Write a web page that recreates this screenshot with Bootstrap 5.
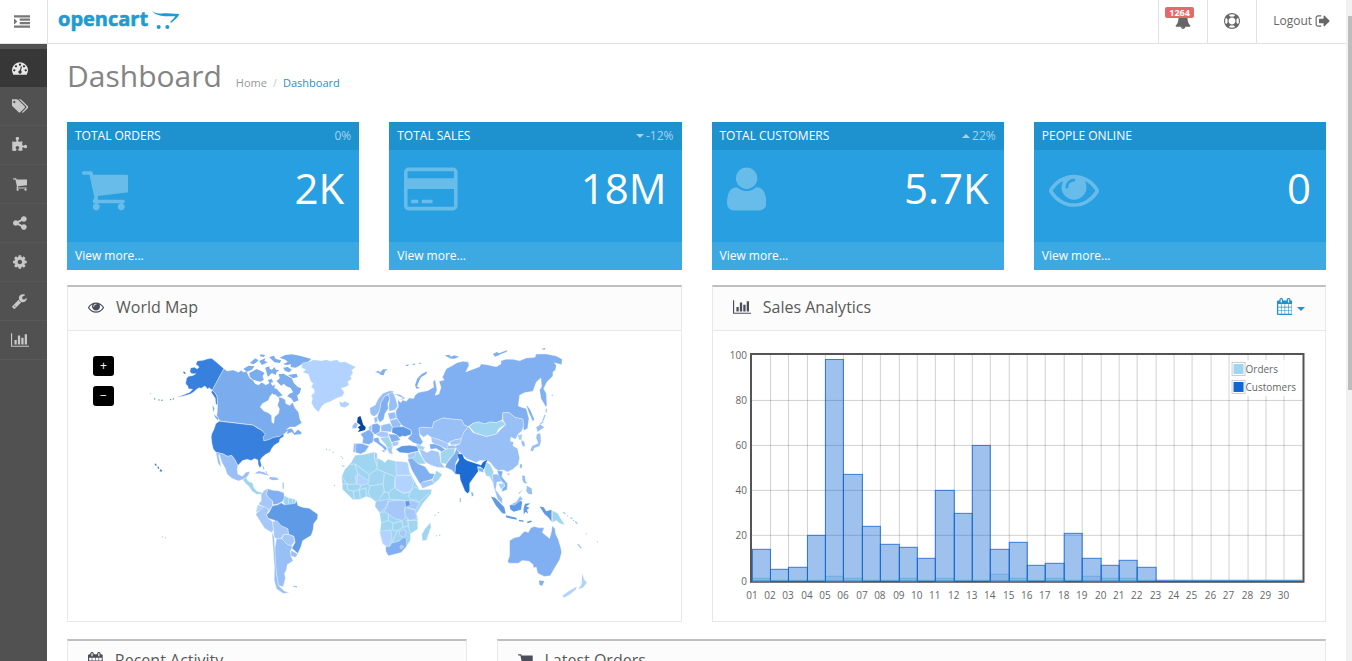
<!DOCTYPE html>
<html lang="en">
<head>
<meta charset="utf-8">
<meta name="viewport" content="width=device-width, initial-scale=1">
<title>Dashboard</title>
<link href="https://cdn.jsdelivr.net/npm/bootstrap@5.3.0/dist/css/bootstrap.min.css" rel="stylesheet">
<style>
body{font-family:"Open Sans",sans-serif;font-size:12px;line-height:18px;color:#666;background:#fff}
a{text-decoration:none}
svg{display:block}
.ico{fill:currentColor;flex:none;height:16px;width:auto}
.top-bar{height:44px;border-bottom:1px solid #e1e1e1}
.top-bar .cell{padding:0 16px 2px;border:0;border-left:1px solid #e1e1e1;background:none;color:#666;display:flex;align-items:center;gap:3px}
.top-bar .menu-toggle{width:47px;padding:0 3px 0 0;justify-content:center;border-left:0;color:#777}
.brand{border-left:1px solid #e1e1e1;padding-left:10px}
.alert-count{position:absolute;left:6px;top:7px;background:#e3696b;color:#fff;font-size:9px;font-weight:700;line-height:11px;padding:0 4px;border-radius:2px}
.side{width:47px;background:#515151;padding-top:5px}
.side a{height:39px;padding-right:7px;color:#c8c8c8;border-bottom:1px solid #585858;display:flex;align-items:center;justify-content:center}
.side a.active{height:38px;background:#373737;color:#e8e8e8;border:0}
.page{padding:0 20px}
.page .row{--bs-gutter-x:30px}
.page h1{font-size:30px;line-height:36px;color:#848484;font-weight:400;margin:0}
.page-head{padding:14px 0 28px;gap:14px}
.breadcrumb{--bs-breadcrumb-item-padding-x:6px;--bs-breadcrumb-divider-color:#ccc;--bs-breadcrumb-font-size:11px}
.breadcrumb a{color:#999}
.breadcrumb .active a{color:#1e91cf}
.tile{background:#279fe0;color:#fff;margin-bottom:15px}
.tile-head{background:#1e91cf;padding:5px 8px;text-transform:uppercase}
.tile-head .pct{color:#a5d3ee;gap:2px}
.tile-head .pct svg{width:8px;height:5px;fill:currentColor}
.tile-body{height:92px;padding:14px 15px}
.tile-body .ico{height:50px;opacity:.3}
.tile-body .num{font-size:42px;line-height:48px}
.tile-foot{background:#3da9e3;padding:5px 8px}
.tile-foot a{color:#fff}
.box{border:1px solid #e8e8e8;border-top:2px solid #bfbfbf;margin-bottom:17px}
.box-head{background:#fcfcfc;border-bottom:1px solid #e8e8e8;height:44px;padding:0 20px 4px;gap:12px;color:#595959}
.box-head h2{font-size:16px;line-height:20px;font-weight:400;margin:0}
.box-head .ico{color:#4c4d5a}
.box-body{padding:15px}
.range-btn{border:0;padding:0;background:none;color:#1e91cf;font-size:14px;display:flex;align-items:center;gap:1px}
.range-btn .ico{color:#1e91cf;height:17px}
.range-btn.dropdown-toggle::after{border-top-width:4px;border-right-width:4px;border-left-width:4px;margin-top:4px}
.zoom-set{position:absolute;left:25px;top:25px;gap:10px}
.zoom-set button{width:21px;height:20px;border:0;border-radius:3px;background:#000;color:#fff;padding:0;line-height:18px}
.chart text{font-size:10px;fill:#666}
.land path{stroke:#fff;stroke-width:1;stroke-linejoin:round}
.rail{width:6px;background:#f1f1f1;padding:16px 0 0 2px}
.rail span{display:block;height:58%;background:#bdbdbd}
.c1{fill:#a0d5f1}.c2{fill:#b2d3ff}.c3{fill:#a6c8f9}.c4{fill:#98bff6}.c5{fill:#81b0f2}.c6{fill:#7bacee}.c7{fill:#5f9ae7}.c8{fill:#3780de}.c9{fill:#1c6cd4}.c10{fill:#04479f}
.land .isle{stroke:none}
.land .dots{fill:none;stroke-width:4;stroke-linecap:round}
.land .dots path{stroke-width:4;stroke:#a6c8f9}
.land .dots .us{stroke:#3780de}
.land .edge{fill:none;stroke:#d9eefc;stroke-width:2}
</style>
</head>
<body>
<svg width="0" height="0" class="position-absolute" aria-hidden="true">
<symbol id="i-cart" viewBox="64 0 1664 1792"><path d="M704 1536q0 52-38 90t-90 38-90-38-38-90 38-90 90-38 90 38 38 90zm896 0q0 52-38 90t-90 38-90-38-38-90 38-90 90-38 90 38 38 90zm128-1088v512q0 24-16.500 42.500t-40.500 21.500l-1044 122q13 60 13 70 0 16-24 64h920q26 0 45 19t19 45-19 45-45 19h-1024q-26 0-45-19t-19-45q0-11 8-31.500t16-36 21.500-40 15.500-29.500l-177-823h-204q-26 0-45-19t-19-45 19-45 45-19h256q16 0 28.500 6.500t19.500 15.500 13 24.500 8 26 5.500 29.500 4.500 26h1201q26 0 45 19t19 45z"/></symbol>
<symbol id="i-bars" viewBox="0 0 2048 1792"><path d="M640 896v512h-256v-512h256zm384-512v1024h-256v-1024h256zm1024 1152v128h-2048v-1536h128v1408h1920zm-640-896v768h-256v-768h256zm384-384v1152h-256v-1152h256z"/></symbol>
<symbol id="i-eye" viewBox="0 0 1792 1792"><path d="M1664 960q-152-236-381-353 61 104 61 225 0 185-131.500 316.500t-316.500 131.500-316.500-131.500-131.500-316.500q0-121 61-225-229 117-381 353 133 205 333.500 326.500t434.500 121.500 434.500-121.500 333.500-326.500zm-720-384q0-20-14-34t-34-14q-125 0-214.500 89.500t-89.500 214.500q0 20 14 34t34 14 34-14 14-34q0-86 61-147t147-61q20 0 34-14t14-34zm848 384q0 34-20 69-140 230-376.500 368.500t-499.500 138.500-499.500-139-376.500-368q-20-35-20-69t20-69q140-229 376.500-368t499.500-139 499.500 139 376.500 368q20 35 20 69z"/></symbol>
<symbol id="i-cal" viewBox="64 0 1664 1792"><path d="M192 1664h288v-288h-288v288zm352 0h320v-288h-320v288zm-352-352h288v-320h-288v320zm352 0h320v-320h-320v320zm-352-384h288v-288h-288v288zm736 736h320v-288h-320v288zm-384-736h320v-288h-320v288zm768 736h288v-288h-288v288zm-384-352h320v-320h-320v320zm-352-864v-288q0-13-9.500-22.500t-22.500-9.500h-64q-13 0-22.500 9.500t-9.500 22.500v288q0 13 9.500 22.500t22.500 9.500h64q13 0 22.500-9.500t9.500-22.500zm736 864h288v-320h-288v320zm-384-384h320v-288h-320v288zm384 0h288v-288h-288v288zm32-480v-288q0-13-9.500-22.500t-22.500-9.500h-64q-13 0-22.500 9.500t-9.500 22.500v288q0 13 9.500 22.500t22.500 9.500h64q13 0 22.500-9.500t9.500-22.500zm384-64v1280q0 52-38 90t-90 38h-1408q-52 0-90-38t-38-90v-1280q0-52 38-90t90-38h128v-96q0-66 47-113t113-47h64q66 0 113 47t47 113v96h384v-96q0-66 47-113t113-47h64q66 0 113 47t47 113v96h128q52 0 90 38t38 90z"/></symbol>
</svg>

<div class="d-flex vh-100 overflow-hidden">
<div class="d-flex flex-column flex-grow-1 overflow-hidden">
<header class="top-bar d-flex flex-shrink-0">
  <button class="cell menu-toggle" type="button" aria-label="Toggle menu"><svg class="ico" viewBox="0 0 1792 1792"><path d="M352 832q0 14-9 23l-288 288q-9 9-23 9-13 0-22.500-9.500t-9.500-22.500v-576q0-13 9.500-22.500t22.500-9.500q14 0 23 9l288 288q9 9 9 23zM0 1280h1792v256h-1792zM640 896h1152v256h-1152zM640 512h1152v256h-1152zM0 128h1792v256h-1792z"/></svg></button>
  <a class="brand d-flex align-items-center" href="#" aria-label="opencart">
    <svg width="124" height="32" viewBox="0 0 124 32">
      <text x="0" y="20" font-size="20" font-weight="700" fill="#1e9bd0" stroke="#1e9bd0" stroke-width=".6" stroke-linejoin="round">opencart</text>
      <g fill="#1e9bd0" transform="translate(-58 -5) scale(.33333)"><path d="M456 30C464 38 480 38 500 37L538 39Q534 50 514 65L510 63Q522 53 526 46C500 46 470 48 456 30Z"/><circle cx="476" cy="78" r="6"/><circle cx="502" cy="78" r="6"/></g>
    </svg></a>
  <div class="ms-auto d-flex">
    <a class="cell position-relative" href="#" aria-label="Notifications"><svg class="ico" viewBox="0 0 1792 1792"><path d="M912 1696q0-16-16-16-59 0-101.500-42.500t-42.500-101.500q0-16-16-16t-16 16q0 73 51.500 124.500t124.500 51.500q16 0 16-16zm816-288q0 52-38 90t-90 38h-448q0 106-75 181t-181 75-181-75-75-181h-448q-52 0-90-38t-38-90q50-42 91-88t85-119.500 74.500-158.500 50-206 19.500-260q0-152 117-282.500t307-158.500q-8-19-8-39 0-40 28-68t68-28 68 28 28 68q0 20-8 39 190 28 307 158.500t117 282.500q0 139 19.500 260t50 206 74.500 158.500 85 119.500 91 88z"/></svg><span class="alert-count">1264</span></a>
    <a class="cell" href="#" aria-label="Help"><svg class="ico" viewBox="0 0 1792 1792"><path d="M896 0q182 0 348 71t286 191 191 286 71 348-71 348-191 286-286 191-348 71-348-71-286-191-191-286-71-348 71-348 191-286 286-191 348-71zm0 128q-190 0-361 90l194 194q82-28 167-28t167 28l194-194q-171-90-361-90zm-678 1129l194-194q-28-82-28-167t28-167l-194-194q-90 171-90 361t90 361zm678 407q190 0 361-90l-194-194q-82 28-167 28t-167-28l-194 194q171 90 361 90zm0-384q159 0 271.500-112.500t112.500-271.500-112.500-271.500-271.500-112.500-271.500 112.500-112.500 271.500 112.500 271.500 271.500 112.500zm484-217l194 194q90-171 90-361t-90-361l-194 194q28 82 28 167t-28 167z"/></svg></a>
    <a class="cell" href="#">Logout <svg class="ico" viewBox="0 0 1664 1792"><path d="M704 1440q0 4 1 20t.5 26.500-3 23.500-10 19.500-20.500 6.500h-320q-119 0-203.500-84.500t-84.500-203.500v-704q0-119 84.500-203.500t203.500-84.500h320q13 0 22.500 9.500t9.500 22.500q0 4 1 20t.5 26.500-3 23.500-10 19.500-20.500 6.500h-320q-66 0-113 47t-47 113v704q0 66 47 113t113 47h312l11.500 1 11.500 3 8 5.500 7 9 2 13.500zm928-544q0 26-19 45l-544 544q-19 19-45 19t-45-19-19-45v-288h-448q-26 0-45-19t-19-45v-384q0-26 19-45t45-19h448v-288q0-26 19-45t45-19 45 19l544 544q19 19 19 45z"/></svg></a>
  </div>
</header>
<div class="d-flex flex-grow-1 overflow-hidden">
<nav class="side flex-shrink-0" aria-label="Main">
  <a class="active" href="#" aria-label="Dashboard"><svg class="ico" viewBox="0 0 1792 1792"><path d="M384 1152q0-53-37.500-90.500t-90.500-37.500-90.500 37.500-37.500 90.500 37.500 90.500 90.500 37.500 90.500-37.500 37.500-90.500zm192-448q0-53-37.500-90.500t-90.500-37.500-90.500 37.500-37.500 90.500 37.500 90.500 90.500 37.500 90.500-37.500 37.500-90.500zm428 481l101-382q6-26-7.500-48.500t-38.500-29.500-48 6.500-30 39.500l-101 382q-60 5-107 43.500t-63 98.500q-20 77 20 146t117 89 146-20 89-117q16-60-6-117t-72-91zm660-33q0-53-37.500-90.500t-90.500-37.500-90.500 37.500-37.500 90.500 37.500 90.500 90.500 37.500 90.500-37.500 37.500-90.500zm-640-640q0-53-37.500-90.500t-90.500-37.500-90.500 37.500-37.500 90.500 37.500 90.500 90.500 37.500 90.500-37.500 37.500-90.500zm448 192q0-53-37.500-90.500t-90.500-37.500-90.500 37.500-37.500 90.500 37.500 90.500 90.500 37.500 90.500-37.500 37.500-90.500zm320 448q0 261-141 483-19 29-54 29h-1402q-35 0-54-29-141-221-141-483 0-182 71-348t191-286 286-191 348-71 348 71 286 191 191 286 71 348z"/></svg></a>
  <a href="#" aria-label="Catalog"><svg class="ico" viewBox="0 0 1856 1792"><path d="M384 448q0-53-37.500-90.500t-90.500-37.500-90.500 37.500-37.500 90.500 37.500 90.500 90.500 37.500 90.500-37.500 37.500-90.500zm1067 576q0 53-37 90l-491 492q-39 37-91 37-53 0-90-37l-715-716q-38-37-64.500-101t-26.500-117v-416q0-52 38-90t90-38h416q53 0 117 26.500t102 64.500l715 714q37 39 37 91zm384 0q0 53-37 90l-491 492q-39 37-91 37-36 0-59-14t-53-45l470-470q37-37 37-90 0-52-37-91l-715-714q-38-38-102-64.500t-117-26.500h224q53 0 117 26.500t102 64.500l715 714q37 39 37 91z"/></svg></a>
  <a href="#" aria-label="Extensions"><svg class="ico" viewBox="64 0 1728 1792"><path d="M1755 1083q0 81-44.500 135t-123.500 54q-41 0-77.500-17.500t-59-38-56.500-38-71-17.500q-110 0-110 124 0 39 16 115t15 115v5q-22 0-33 1-34 3-97.500 11.500t-115.500 13.500-98 5q-61 0-103-26.500t-42-83.500q0-37 17.500-71t38-56.500 38-59 17.500-77.500q0-79-54-123.500t-135-44.500q-84 0-143 45.500t-59 127.500q0 43 15 83t33.500 64.500 33.500 53 15 50.500q0 45-46 89-37 35-117 35-95 0-245-24-9-2-27.500-4t-27.500-4l-13-2q-1 0-3-1-2 0-2-1v-1024q2 1 17.500 3.500t34 5 21.500 3.500q150 24 245 24 80 0 117-35 46-44 46-89 0-22-15-50.500t-33.500-53-33.500-64.500-15-83q0-82 59-127.500t144-45.500q80 0 134 44.500t54 123.500q0 41-17.500 77.500t-38 59-38 56.500-17.500 71q0 57 42 83.500t103 26.500q64 0 180-15t163-17v2q-1 2-3.500 17.500t-5 34-3.500 21.500q-24 150-24 245 0 80 35 117 44 46 89 46 22 0 50.500-15t53-33.500 64.500-33.500 83-15q82 0 127.500 59t45.500 143z"/></svg></a>
  <a href="#" aria-label="Sales"><svg class="ico" viewBox="64 0 1664 1792"><use href="#i-cart" x="64" width="1664" height="1792"/></svg></a>
  <a href="#" aria-label="Marketing"><svg class="ico" viewBox="128 0 1536 1792"><path d="M1344 1024q133 0 226.500 93.500t93.500 226.500-93.500 226.500-226.500 93.500-226.500-93.500-93.500-226.500q0-12 2-34l-360-180q-92 86-218 86-133 0-226.500-93.500t-93.500-226.500 93.500-226.500 226.500-93.500q126 0 218 86l360-180q-2-22-2-34 0-133 93.500-226.500t226.500-93.500 226.500 93.500 93.500 226.500-93.500 226.500-226.500 93.500q-126 0-218-86l-360 180q2 22 2 34t-2 34l360 180q92-86 218-86z"/></svg></a>
  <a href="#" aria-label="System"><svg class="ico" viewBox="128 0 1536 1792"><path d="M1152 896q0-106-75-181t-181-75-181 75-75 181 75 181 181 75 181-75 75-181zm512-109v222q0 12-8 23t-20 13l-185 28q-19 54-39 91 35 50 107 138 10 12 10 25t-9 23q-27 37-99 108t-94 71q-12 0-26-9l-138-108q-44 23-91 38-16 136-29 186-7 28-36 28h-222q-14 0-24.500-8.500t-11.500-21.500l-28-184q-49-16-90-37l-141 107q-10 9-25 9-14 0-25-11-126-114-165-168-7-10-7-23 0-12 8-23 15-21 51-66.500t54-70.500q-27-50-41-99l-183-27q-13-2-21-12.500t-8-23.500v-222q0-12 8-23t19-13l186-28q14-46 39-92-40-57-107-138-10-12-10-24 0-10 9-23 26-36 98.500-107.500t94.500-71.500q13 0 26 10l138 107q44-23 91-38 16-136 29-186 7-28 36-28h222q14 0 24.500 8.500t11.500 21.500l28 184q49 16 90 37l142-107q9-9 24-9 13 0 25 10 129 119 165 170 7 8 7 22 0 12-8 23-15 21-51 66.500t-54 70.500q26 50 41 98l183 28q13 2 21 12.500t8 23.500z"/></svg></a>
  <a href="#" aria-label="Tools"><svg class="ico" viewBox="64 0 1728 1792"><path d="M448 1472q0-26-19-45t-45-19-45 19-19 45 19 45 45 19 45-19 19-45zm644-420l-682 682q-37 37-90 37-52 0-91-37l-106-108q-38-36-38-90 0-53 38-91l681-681q39 98 114.500 173.500t173.500 114.500zm634-435q0 39-23 106-47 134-164.500 217.500t-258.500 83.500q-185 0-316.500-131.500t-131.500-316.500 131.500-316.500 316.500-131.500q58 0 121.500 16.500t107.500 46.500q16 11 16 28t-16 28l-293 169v224l193 107q5-3 79-48.500t135.500-81 70.500-35.500q15 0 23.500 10t8.500 25z"/></svg></a>
  <a href="#" aria-label="Reports"><svg class="ico" viewBox="0 0 2048 1792"><use href="#i-bars" width="2048" height="1792"/></svg></a>
</nav>
<main class="page flex-grow-1 overflow-hidden">
  <div class="page-head d-flex align-items-baseline">
    <h1>Dashboard</h1>
    <nav aria-label="Breadcrumb"><ol class="breadcrumb mb-0"><li class="breadcrumb-item"><a href="#">Home</a></li><li class="breadcrumb-item active"><a href="#">Dashboard</a></li></ol></nav>
  </div>
  <div class="row">
    <div class="col-3"><section class="tile">
      <div class="tile-head d-flex justify-content-between"><span>Total Orders</span><span class="pct">0%</span></div>
      <div class="tile-body d-flex justify-content-between"><svg class="ico" viewBox="64 0 1664 1792"><use href="#i-cart" x="64" width="1664" height="1792"/></svg><span class="num">2K</span></div>
      <div class="tile-foot"><a href="#">View more...</a></div></section></div>
    <div class="col-3"><section class="tile">
      <div class="tile-head d-flex justify-content-between"><span>Total Sales</span><span class="pct d-flex align-items-center"><svg viewBox="0 0 8 5"><path d="M0 0h8l-4 4z"/></svg>-12%</span></div>
      <div class="tile-body d-flex justify-content-between"><svg class="ico" viewBox="0 0 1920 1792"><path d="M1760 128q66 0 113 47t47 113v1216q0 66-47 113t-113 47h-1600q-66 0-113-47t-47-113v-1216q0-66 47-113t113-47h1600zm-1600 128q-13 0-22.500 9.500t-9.500 22.500v224h1664v-224q0-13-9.500-22.500t-22.500-9.500h-1600zm1600 1280q13 0 22.500-9.500t9.500-22.500v-608h-1664v608q0 13 9.500 22.500t22.500 9.500h1600zm-1504-128v-128h256v128h-256zm384 0v-128h384v128h-384z"/></svg><span class="num">18M</span></div>
      <div class="tile-foot"><a href="#">View more...</a></div></section></div>
    <div class="col-3"><section class="tile">
      <div class="tile-head d-flex justify-content-between"><span>Total Customers</span><span class="pct d-flex align-items-center"><svg viewBox="0 0 8 5"><path d="M0 4h8l-4-4z"/></svg>22%</span></div>
      <div class="tile-body d-flex justify-content-between"><svg class="ico" viewBox="192 0 1408 1792"><path d="M1600 1405q0 120-73 189.500t-194 69.500h-874q-121 0-194-69.500t-73-189.500q0-53 3.500-103.500t14-109 26.500-108.500 43-97.500 62-81 85.500-53.500 111.500-20q9 0 42 21.500t74.500 48 108 48 133.500 21.500 133.500-21.500 108-48 74.500-48 42-21.500q61 0 111.500 20t85.500 53.500 62 81 43 97.500 26.500 108.500 14 109 3.500 103.500zm-320-893q0 159-112.500 271.500t-271.500 112.500-271.500-112.500-112.500-271.500 112.500-271.500 271.500-112.500 271.500 112.500 112.500 271.500z"/></svg><span class="num">5.7K</span></div>
      <div class="tile-foot"><a href="#">View more...</a></div></section></div>
    <div class="col-3"><section class="tile">
      <div class="tile-head"><span>People Online</span></div>
      <div class="tile-body d-flex justify-content-between"><svg class="ico" viewBox="0 0 1792 1792"><use href="#i-eye" width="1792" height="1792"/></svg><span class="num">0</span></div>
      <div class="tile-foot"><a href="#">View more...</a></div></section></div>
  </div>
  <div class="row">
    <div class="col-6"><section class="box">
      <div class="box-head d-flex align-items-center"><svg class="ico" viewBox="0 0 1792 1792"><use href="#i-eye" width="1792" height="1792"/></svg><h2>World Map</h2></div>
      <div class="box-body position-relative">
        <svg class="w-100" viewBox="83 346 583 260" role="img" aria-label="World map">
        <g class="land" transform="translate(140 335) scale(.33333)">
          <path class="c8" d="M215 70L235 86L252 101L217 166L208 158L203 162L195 153L184 160L178 158L170 163L160 172L150 178L128 184L108 188L130 180L150 172L158 163L146 161L143 152L137 147L140 130L146 124L158 122L168 116L156 116L150 110L152 99L164 97L172 102L178 96L168 88L172 78L190 76L202 72Z"/>
          <path class="c8" d="M217 166L226 174L232 186L233 210L228 208L226 190L214 172Z"/>
          <path class="c6" d="M252 101L262 108L280 105L296 112L304 106L312 112L320 108L326 122L330 130L338 134L346 146L356 150L366 142L378 150L392 142L398 152L406 148L404 160L412 162L418 172L414 176L402 180L398 176L390 185L386 196L368 206L361 216L372 228L386 234L395 242L396 262L402 266L404 246L416 236L419 222L413 210L418 196L416 186L424 188L436 194L438 206L450 212L458 202L466 220L476 232L480 252L486 264L466 276L450 276L440 284L454 280L460 286L464 294L474 284L486 292L484 298L464 300L456 292L440 298L444 288L432 298L420 304L400 308L388 314L372 318L370 306L376 298L366 286L352 278L340 270L240 258L230 240L232 236L233 210L232 186L226 174L217 166Z"/>
          <g class="c6"><path class="isle" d="M328 114L340 108L350 102L364 108L374 114L368 124L372 134L362 140L352 138L340 134L330 126ZM310 102L326 92L344 94L336 104L322 110ZM330 84L346 70L356 76L350 82L340 88ZM358 78L376 70L374 78L384 82L366 90ZM376 98L388 94L390 102L396 104L404 96L408 104L418 106L410 112L408 120L396 114L384 126L380 112ZM388 66L402 62L408 72L424 76L420 84L404 82L396 74ZM420 68L436 60L456 58L480 62L514 72L504 82L486 88L468 98L452 96L454 88L440 90L430 88L444 80L436 74ZM430 98L444 96L456 104L448 112L436 108ZM416 118L432 116L444 124L456 130L462 144L474 156L484 160L480 174L472 182L476 196L462 202L454 190L442 184L450 176L460 172L452 158L440 154L432 146L424 152L410 138L420 130ZM404 160L420 172L428 182L414 186L406 178ZM384 134L396 132L400 142L388 144ZM444 120L470 116L474 126L460 130ZM362 58L376 60L372 66L360 64ZM218 212L224 220L220 232ZM222 238L236 250L234 256L226 248Z"/></g>
          <path class="c8" d="M238 259L340 271L352 279L366 287L376 298L370 306L372 318L388 314L400 308L420 304L430 296L432 304L420 312L418 322L404 330L396 340L390 352L378 358L366 368L361 376L365 392L360 399L355 388L354 375L344 371L334 377L322 373L308 377L294 392L286 376L276 362L262 364L250 357L228 352L220 342L216 324L214 306L216 296L222 284L228 266Z"/>
          <path class="c4" d="M228 352L250 357L262 364L276 362L286 376L294 392L292 404L294 418L308 424L318 412L330 410L326 420L318 430L308 434L296 438L276 430L262 418L256 400L246 382L238 358L236 362L242 386L243 398L234 384L231 368Z"/>
          <path class="c1" d="M308 434L320 428L324 438L338 444L342 458L350 468L362 472L372 476L362 478L350 478L338 470L328 456L316 444Z"/>
          <path class="c4 isle" d="M344 416L356 408L372 412L390 422L378 420L362 416ZM390 426L410 428L418 434L400 436L388 432ZM368 392l4 4l2 8l-4-2zM376 408l6 3l-2 4z"/>
          <path class="c3" d="M384 460L374 466L364 478L364 498L356 508L372 516L388 524L380 540L398 513L398 498L386 488L380 478Z"/>
          <path class="c5" d="M384 462L380 478L386 488L398 498L400 510L412 508L428 500L434 490L432 474L416 468L398 466Z"/>
          <path class="c1" d="M434 482L446 489L468 494L466 510L440 514L430 502ZM446 489V510M458 491V511"/>
          <path class="c7" d="M398 513L414 510L424 504L434 510L466 506L470 496L474 512L490 518L508 520L534 538L533 552L522 566L520 584L514 602L500 610L488 618L484 634L474 656L456 640L466 622L462 604L446 598L444 582L420 572L404 556L384 550L380 540L388 532Z"/>
          <path class="c3" d="M350 534L358 528L372 514L388 524L380 540L384 550L398 560L401 584L396 594L374 580L360 558L348 540Z"/><path class="c2" d="M354 510L372 515L358 530L348 532Z"/>
          <path class="c3" d="M398 560L412 558L424 572L444 582L446 598L430 600L424 612L410 612L402 606L401 584Z"/>
          <path class="c3" d="M430 600L446 598L462 606L464 620L454 634L444 630L426 614Z"/>
          <path class="c4" d="M410 612L426 612L444 630L458 634L452 648L454 666L460 678L442 690L440 704L434 716L437 730L430 756L416 752L410 720L406 680L405 640Z"/>
          <path class="c4" d="M396 590L403 608L406 660L410 720L416 752L432 768L448 774L430 776L410 762L403 736L404 700L400 640Z"/>
          <path class="c4" d="M454 646L474 658L466 668L453 662Z"/>
          <path class="c2" d="M488 84L508 80L520 74L545 77L560 74L572 78L592 74L600 82L616 80L648 96L636 106L640 114L632 124L636 132L624 140L628 150L618 156L604 160L614 172L608 184L590 190L572 200L556 206L546 214L536 232L522 218L515 204L518 190L514 182L524 172L522 162L514 156L520 146L512 138L506 118L488 112L498 104L484 98Z"/>
          <path class="c2 isle" d="M598 200L608 204L614 199L628 206L626 212L614 218L602 214Z"/>
          <g class="dots"><path class="us" d="M44 192h.1M57 195h.1M66 196h.1M92 194h.1M100 192h.1M132 112l3 3M46 388l2 3M54 397l2 3M62 405l3 3M61 408h3"/><path d="M560 343h.1M570 345h.1M580 352h.1M608 370h.1M612 394h.1M584 452h.1M430 444v16M68 606h.1M77 609h.1M462 755l8 1M32 176h.1"/></g>
        </g>
        <g class="land" transform="translate(340 330) scale(.33333)">
          <path class="c10 isle" d="M54 262L62 258L66 270L70 284L78 292L76 300L54 306L60 298L54 292L63 286L52 278Z"/><path class="c4 isle" d="M38 288L46 278L54 282L50 294L38 296Z"/>
          <path class="c4" d="M90 234L106 226L116 206L130 190L150 182L162 184L158 192L146 192L134 200L124 218L120 240L112 254L102 260L92 252Z"/>
          <path class="c5" d="M120 240L124 218L134 200L146 194L150 206L144 222L146 236L136 250L132 268L120 278L112 262Z"/>
          <path class="c4" d="M150 206L146 192L160 188L168 206L174 228L166 240L148 244L147 228Z"/>
          <path class="c4" d="M102 264L112 260L114 274L106 280ZM144 250L166 246L170 264L150 270ZM150 272L172 266L184 284L180 292L158 292Z"/>
          <path class="c6" d="M96 284L112 280L122 288L120 306L106 314L96 304Z"/><path class="c4" d="M124 286L150 280L158 292L154 306L124 304Z"/>
          <path class="c5" d="M62 312L78 304L90 298L102 314L100 336L88 344L68 340L70 324Z"/><path class="c3" d="M86 292L96 284L96 304L88 300Z"/>
          <path class="c5" d="M42 341L66 341L88 348L76 366L62 372L48 368Z"/><path class="c4" d="M42 341L49 344L47 368L40 366Z"/>
          <path class="c5" d="M100 326L116 322L120 336L142 354L138 364L128 352L112 340L102 334ZM124 362L136 360L134 368Z"/>
          <path class="c3" d="M106 314L124 304L146 308L146 322L124 322Z"/><path class="c1" d="M120 324L146 320L156 340L158 350L146 358L136 342Z"/>
          <path class="c3" d="M142 356L160 348L156 362L160 374L148 370Z"/>
          <path class="c5" d="M146 312L172 314L182 330L156 338Z"/><path class="c3" d="M156 338L178 334L174 346L160 350Z"/>
          <path class="c7" d="M158 292L190 290L214 300L214 314L196 320L188 318L180 322L170 314L156 308Z"/>
          <path class="c7" d="M168 358L186 348L210 346L234 350L236 364L206 370L180 368Z"/>
          <path class="c5" d="M162 192L180 194L196 204L190 208L178 210L174 208L176 230L168 244L170 262L184 284L192 290L214 300L216 312L204 326L220 338L242 346L250 336L240 318L238 294L250 292L278 294L282 276L310 264L340 268L366 270L374 286L386 290L400 280L416 276L436 282L450 276L470 278L488 270L490 248L508 248L526 262L550 268L552 302L564 296L568 266L560 236L546 232L536 228L540 196L556 188L580 184L590 156L604 144L606 170L600 180L604 206L618 230L622 228L620 190L612 176L622 156L640 138L640 126L648 120L650 106L644 98L666 104L668 88L650 78L620 72L590 72L586 82L560 84L540 92L520 88L500 88L484 92L484 102L470 110L458 108L442 104L424 102L420 110L404 116L378 126L388 106L386 96L370 94L352 98L336 108L320 116L308 142L314 150L298 154L304 172L298 192L286 196L292 180L286 148L280 156L282 172L264 182L236 188L226 196L222 206L208 204L200 214L188 210L184 218L176 212L190 204Z"/>
          <path class="c5 isle" d="M226 166L232 146L246 132L262 124L260 132L244 142L236 158L232 170L242 174L230 176ZM106 126L118 122L120 128L130 118L144 118L136 124L132 136L122 134L118 130ZM316 76L328 74L334 80L344 76L358 80L344 86L334 86L322 80ZM460 72L472 66L478 70L504 60L500 66L484 72L478 76L466 80ZM606 56L618 54L614 60ZM196 108l10-6v6zM214 104l12-4v4zM234 100l10-2v4zM560 224L572 240L584 268L580 274L568 248Z"/>
          <path class="c4" d="M238 294L250 292L278 294L282 276L310 264L340 268L366 270L374 286L386 290L372 308L366 326L344 330L330 336L324 342L300 330L276 324L264 314L252 322L240 312Z"/>
          <path class="c4" d="M386 290L400 308L440 320L470 312L498 284L490 270L490 248L508 248L526 262L550 268L552 290L546 304L536 312L528 328L514 322L512 334L522 336L520 348L534 356L540 384L536 404L520 418L504 426L490 420L476 422L466 416L454 400L444 392L420 392L410 398L380 386L366 372L350 358L346 348L360 342L364 326L372 308Z"/>
          <path class="c1" d="M388 290L400 280L416 276L436 282L450 276L470 278L488 272L498 284L478 296L470 312L440 320L404 308Z"/>
          <path class="c3" d="M274 322L300 330L324 340L330 352L320 358L302 348L284 344L276 336Z"/><path class="c6" d="M270 342L284 342L302 348L318 360L306 366L290 356L272 358Z"/><path class="c3" d="M330 336L344 330L366 326L360 342L334 346Z"/><path class="c4" d="M322 348L346 346L350 356L324 358Z"/>
          <path class="c1" d="M228 342L242 346L256 352L250 362L236 358ZM204 372L236 364L248 384L258 402L236 402L212 388Z"/><path class="c3" d="M204 374L228 366L226 380L206 388Z"/>
          <path class="c3" d="M238 358L252 362L262 368L276 360L298 366L304 398L316 414L292 412L274 406L256 396L246 378Z"/>
          <path class="c1" d="M302 368L320 358L346 354L344 372L330 386L320 402L304 400Z"/>
          <path class="c6" d="M316 412L320 402L332 386L344 372L350 356L360 370L356 384L348 400L346 432L336 420Z"/>
          <path class="c9" d="M352 372L368 372L374 386L382 392L414 402L424 406L430 396L444 388L440 404L432 420L424 412L414 410L416 424L400 446L390 460L390 484L384 491L376 484L362 450L360 434L346 432L348 406L358 390Z"/>
          <path class="c5" d="M414 412L430 416L432 428L418 424ZM394 486l6 2l2 10l-6 2z"/>
          <path class="c5" d="M204 388L216 384L236 402L256 410L270 430L286 432L278 448L250 456L242 464L236 454L216 420Z"/><path class="c3" d="M242 462L250 456L278 450L284 462L248 476Z"/><path class="c1" d="M278 450L286 432L290 422L308 434L296 450L284 460Z"/>
          <path class="c1" d="M46 376L70 374L104 366L112 370L112 384L126 390L136 398L144 388L168 394L200 396L206 400L202 408L214 434L226 456L240 480L276 478L274 492L250 520L230 552L234 560L234 598L212 612L212 632L200 650L184 668L146 678L138 650L128 640L120 610L124 580L120 550L106 530L108 516L96 506L80 500L62 508L40 510L24 494L8 478L6 440L14 420L34 398Z"/>
          <path class="c2" d="M168 394L200 396L206 404L210 430L214 436H170ZM170 437H214L222 460L212 486L192 490L172 480L164 466Z"/>
          <path class="c2" d="M120 604L154 600L156 620L150 650L138 648L128 640ZM46 440L54 432L88 454L84 462L64 466L50 462Z"/>
          <path class="c3" d="M148 514L190 510L200 520L194 540L198 562L188 572L164 566L146 552L134 546Z"/><path class="c3" d="M108 514L146 508L140 530L120 548L106 530ZM196 534L226 540L232 566L210 572L196 556ZM202 512L232 510L240 520L228 540L204 532Z"/>
          <path class="c7" d="M196 514L208 512L212 526L198 532Z"/>
          <path class="c5" d="M138 650L150 650L156 640L178 634L194 620L200 628L200 650L184 668L146 678L138 664Z"/><path class="c3" d="M184 646L192 650L186 658L180 654ZM178 606L194 598L200 610L192 624L180 616ZM104 368L112 370L112 388L104 384Z"/>
          <path class="edge" d="M104 366L104 386L112 408V418L88 434L46 402L32 404M46 402L54 432L50 462L22 464L8 442M112 418L166 440V472L146 488L128 486M112 408V388M134 430L130 462L90 468L84 462M88 434L88 454M90 468L86 492L92 502M130 462L134 486L118 508M166 472L172 480L192 490L212 486M146 488L150 508L196 512M212 486L206 500L214 510L238 518L268 490M240 480L226 470L214 484M22 464L24 480L40 484L44 508M40 484L58 480L62 506M58 480L78 474L80 498M64 466L58 480M8 462L26 462M120 580L146 572L160 580L158 600M160 580L186 574L190 592L172 604L158 600M190 592L206 588L204 566M206 588L212 612M172 604L156 640M200 572L232 572M146 552V572M120 548L134 546"/>
          <path class="c1" d="M272 578L274 592L260 632L248 632L246 614L256 596Z"/>
          <path class="c1" d="M440 396L452 404L462 426L458 440L466 474L458 456L450 440L440 438L434 424Z"/>
          <path class="c4" d="M458 434L470 432L488 440L490 454L472 456L468 480L488 506L488 522L474 508L462 470Z"/><path class="c5" d="M472 422L490 424L486 440L504 462L502 480L486 486L488 476L496 468L480 444Z"/><path class="c1" d="M476 462L494 460L494 470L484 478Z"/>
          <path class="c7 isle" d="M454 500L466 504L494 532L498 552L488 550L468 526ZM498 556L530 564L532 570L500 563ZM510 526L524 524L540 512L548 516L544 540L522 546L512 538ZM556 522L572 520L560 530L570 534L562 540L566 552L558 546L552 554L552 536ZM600 530L612 532L620 544L636 540L636 576L626 562L614 552ZM538 570l14 2v4l-14-2zM562 576l12-4l4 4l-14 4z"/>
          <path class="c4" d="M512 524L530 516L542 498L550 508L540 514L524 526Z"/><path class="c1" d="M638 542L654 550L660 560L676 586L660 580L650 572L638 578Z"/>
          <path class="c4 isle" d="M548 436L556 438L558 454L564 460L554 460L548 450ZM562 468L576 476L578 494L566 492L560 484ZM552 478l-16 16l2-6zM542 402l6 2l-2 12l-6-4zM502 432l8-2l-2 6zM572 362L578 348L596 340L590 324L592 312L602 310L604 334L600 348L584 354L580 364ZM590 292L602 284L614 292L602 300L594 306ZM546 330L554 336L556 348L550 350L546 340Z"/><path class="c1" d="M534 316L548 312L546 330L538 330Z"/>
          <path class="c5" d="M510 632L524 624L540 620L548 610L556 604L566 608L574 594L584 590L598 594L614 594L608 608L620 618L630 626L636 604L638 588L646 596L648 612L656 628L664 656L666 668L660 690L642 720L632 738L614 740L594 730L590 712L582 714L580 704L568 694L548 692L536 700L508 700L504 694L510 678Z"/>
          <path class="c5 isle" d="M598 752L614 754L608 768L600 766Z"/><path class="c2 isle" d="M728 732L734 750L742 758L730 774L716 778L726 764ZM712 770L708 780L690 794L674 804L668 798L688 784Z"/>
          <g class="dots"><path d="M672 548l4 3M684 558h.1M694 564l3 2M702 572h.1M708 576l4 4M716 644l8 10M740 612h.1M774 636h.1M362 506v10M286 556h.1M296 548h.1M290 618h.1M300 616h.1M620 238v8M616 256l-6 16M610 276l-8 6M638 196h.1M4 380h.1M8 408h.1"/></g>
        </g>
        </svg>
        <div class="zoom-set d-flex flex-column"><button type="button" aria-label="Zoom in">+</button><button type="button" aria-label="Zoom out">−</button></div>
      </div></section></div>
    <div class="col-6"><section class="box">
      <div class="box-head d-flex align-items-center"><svg class="ico" viewBox="0 0 2048 1792"><use href="#i-bars" width="2048" height="1792"/></svg><h2>Sales Analytics</h2>
        <div class="dropdown ms-auto"><button class="range-btn dropdown-toggle" type="button" data-bs-toggle="dropdown" aria-label="Date range"><svg class="ico" viewBox="64 0 1664 1792"><use href="#i-cal" x="64" width="1664" height="1792"/></svg></button></div></div>
      <div class="box-body"><svg class="chart w-100" id="chart" viewBox="728 346 583 260" role="img" aria-label="Sales analytics"></svg></div></section></div>
  </div>
  <div class="row">
    <div class="col-4"><section class="box"><div class="box-head d-flex align-items-center"><svg class="ico" viewBox="64 0 1664 1792"><use href="#i-cal" x="64" width="1664" height="1792"/></svg><h2>Recent Activity</h2></div></section></div>
    <div class="col-8"><section class="box"><div class="box-head d-flex align-items-center"><svg class="ico" viewBox="64 0 1664 1792"><use href="#i-cart" x="64" width="1664" height="1792"/></svg><h2>Latest Orders</h2></div></section></div>
  </div>
</main>
</div>
</div>
<div class="rail flex-shrink-0" aria-hidden="true"><span></span></div>
</div>
<script src="https://cdn.jsdelivr.net/npm/bootstrap@5.3.0/dist/js/bootstrap.bundle.min.js"></script>
<script>
const orders = [1,0,0,0,2,1,0,0,1,0,1,0,0,3,1,0,1,0,2,1,1,0,0,0,0,0,0,0,0,0];
const customers = [14,5,6,20,98,47,24,16,15,10,40,30,60,14,17,7,8,21,10,7,9,6,0,0,0,0,0,0,0,0];
const left = 752, right = 1303, top0 = 355, base = 581, step = (right - left) / 30;
const X = i => Math.round(left + i * step - 0.4), Y = v => Math.round(base - v * (base - top0) / 100 - 0.4);
let s = '';
for (let i = 1; i < 30; i++) s += `<path d="M${X(i)}.500 ${top0}V${base}" stroke="#545454" stroke-opacity=".27"/>`;
for (let v = 20; v < 100; v += 20) s += `<path d="M${left} ${Y(v)}.500H${right}" stroke="#545454" stroke-opacity=".27"/>`;
s += '<rect x="751" y="354" width="553" height="228" fill="none" stroke="#545454" stroke-width="2"/>';
const bars = (data, color) => data.forEach((v, i) => {
  const x = X(i), w = X(i + 1) - x;
  s += v
    ? `<rect x="${x}.500" y="${Y(v)}.500" width="${w}" height="${base - Y(v)}" fill="${color}" fill-opacity=".4" stroke="${color}" stroke-opacity=".8"/>`
    : `<path d="M${x} ${base - 1}.500h${w}" stroke="${color}" stroke-opacity=".7"/>`;
});
bars(orders, '#9fd5f1');
bars(customers, '#1065d2');
for (let v = 0; v <= 100; v += 20) s += `<text x="747" y="${Y(v) + 4}" text-anchor="end">${v}</text>`;
for (let i = 0; i < 30; i++) s += `<text x="${X(i)}" y="599" text-anchor="middle">${String(i + 1).padStart(2, '0')}</text>`;
s += '<rect x="1231" y="360" width="67" height="36" fill="#fff" fill-opacity=".85"/>';
[['Orders', '#9fd5f1'], ['Customers', '#1065d2']].forEach(([name, color], i) => {
  const y = 362 + i * 18;
  s += `<rect x="1232.500" y="${y}.500" width="13" height="13" fill="#fff" stroke="#ccc"/><rect x="1234" y="${y + 2}" width="10" height="10" fill="${color}"/><text x="1246" y="${y + 11}">${name}</text>`;
});
document.getElementById('chart').innerHTML = s;
</script>
</body>
</html>
